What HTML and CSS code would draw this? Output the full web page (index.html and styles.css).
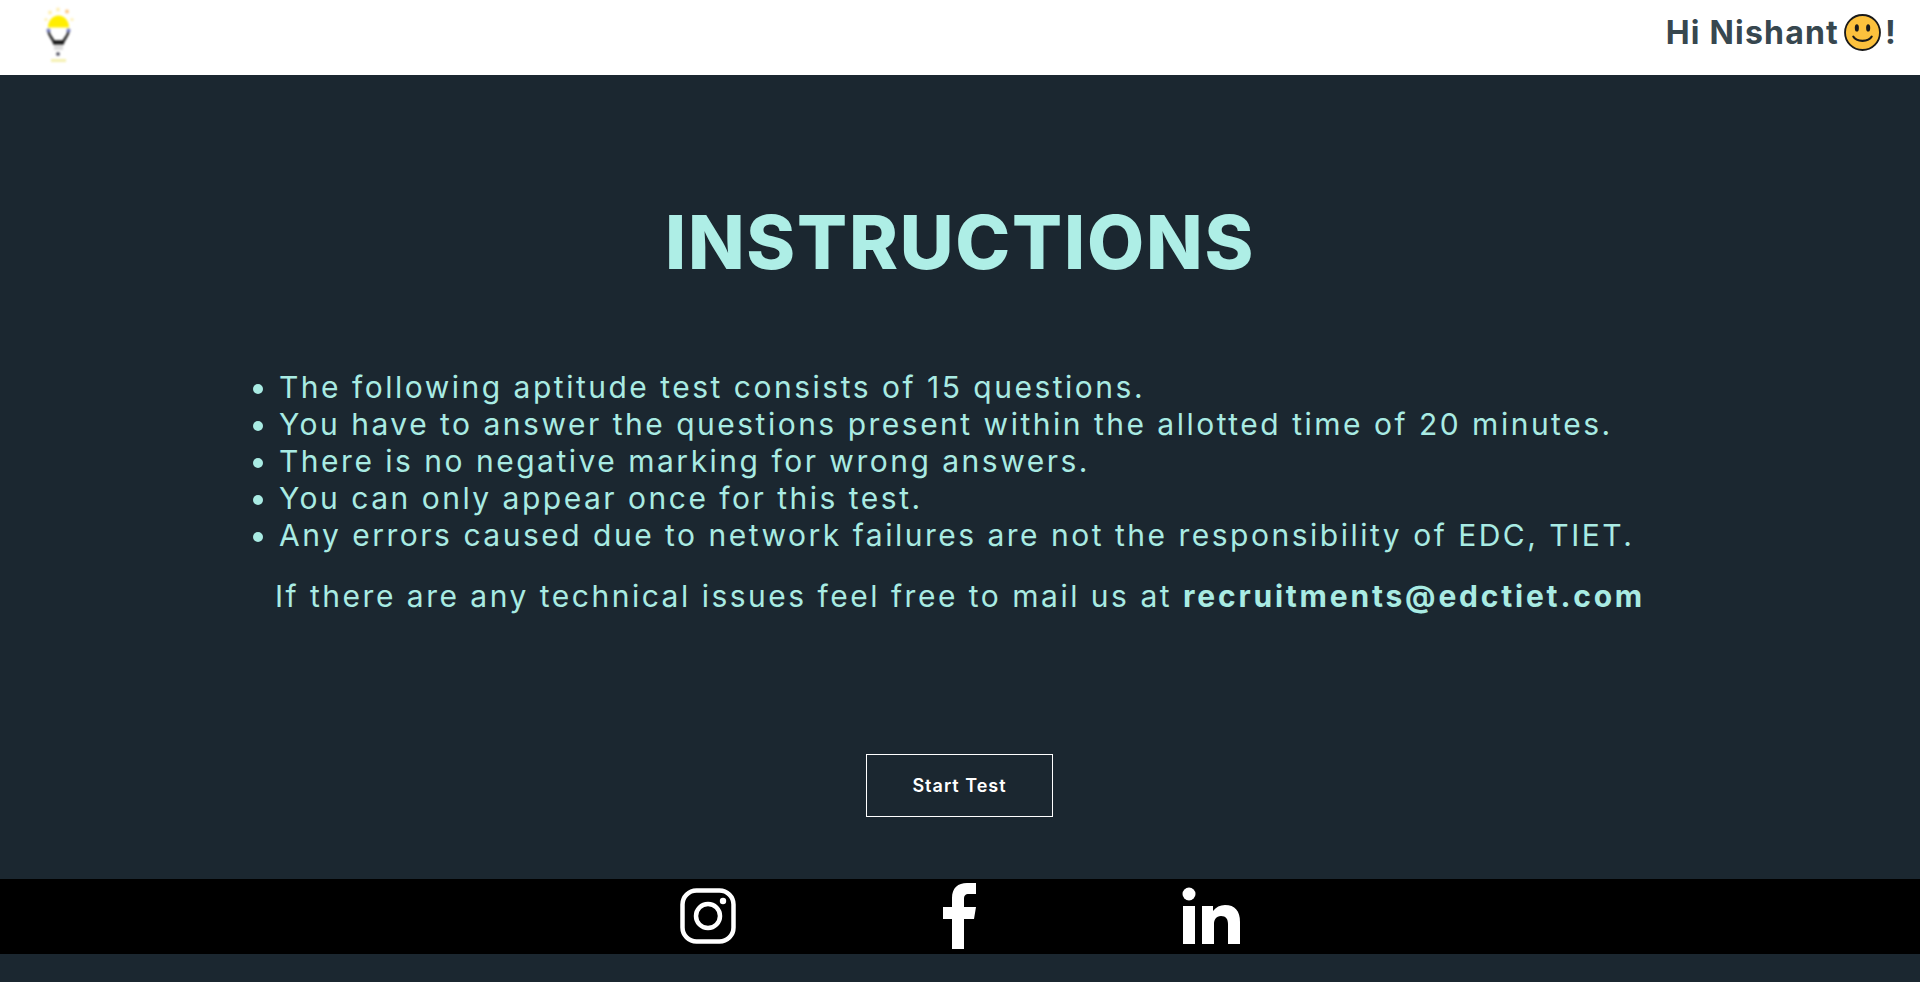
FILE: index.html
```html
<!DOCTYPE html>
<html lang="en">
<head>
    <meta charset="UTF-8">
    <meta name="viewport" content="width=device-width, initial-scale=1.0">
    <title>Instructions</title>
    <link rel="stylesheet" href="styles.css">
</head>
<body>
    <header class="topbar">
        <svg class="logo" viewBox="0 0 40 60" width="40" height="60" aria-hidden="true">
            <path d="M9 25.500a10.500 12 0 0 1 21 0z" fill="#ffee00"/>
            <circle cx="11" cy="10.500" r="2" fill="#fff0b0"/>
            <circle cx="19" cy="7.500" r="2" fill="#ffefb5"/>
            <circle cx="28" cy="9.500" r="2" fill="#ffc880"/>
            <circle cx="7" cy="17.500" r="1.600" fill="#fff0b0"/>
            <circle cx="33" cy="17.500" r="1.600" fill="#fff0b0"/>
            <path d="M9.500 28.500c0 6 4 7 5 11h10c1-4 5-5 5-11" fill="none" stroke="#222" stroke-width="2.500"/>
            <circle cx="9.500" cy="28.500" r="2" fill="#7078b8"/>
            <circle cx="29.500" cy="28.500" r="2" fill="#7078b8"/>
            <rect x="14" y="39" width="11" height="3.500" fill="#111"/>
            <rect x="15" y="43" width="9" height="5" fill="#ddd"/>
            <circle cx="19" cy="52" r="1.800" fill="#334"/>
            <rect x="12" y="57" width="15" height="3" fill="#f5f0b0"/>
        </svg>
        <div class="greeting">
            Hi Nishant<svg class="smiley" viewBox="0 0 36 36" width="37" height="37" role="img" aria-label="smile">
                <circle cx="18" cy="18" r="17" fill="#fcc13d" stroke="#1a1a1a" stroke-width="1.800"/>
                <ellipse cx="12.500" cy="13.500" rx="2" ry="3.600" fill="#1a1a1a"/>
                <ellipse cx="23.500" cy="13.500" rx="2" ry="3.600" fill="#1a1a1a"/>
                <path d="M9 22c3 5.500 15 5.500 18 0" fill="none" stroke="#1a1a1a" stroke-width="2" stroke-linecap="round"/>
            </svg>!
        </div>
    </header>

    <main class="content">
        <h1>INSTRUCTIONS</h1>
        <ul class="rules">
            <li>The following aptitude test consists of 15 questions.</li>
            <li>You have to answer the questions present within the allotted time of 20 minutes.</li>
            <li>There is no negative marking for wrong answers.</li>
            <li>You can only appear once for this test.</li>
            <li>Any errors caused due to network failures are not the responsibility of EDC, TIET.</li>
        </ul>
        <p class="contact">If there are any technical issues feel free to mail us at <strong>recruitments@edctiet.com</strong></p>
        <button type="button" class="start-btn">Start Test</button>
    </main>

    <footer class="social">
        <a href="#" aria-label="Instagram">
            <svg viewBox="0 0 56 56" width="56" height="56">
                <rect x="2.500" y="2.500" width="51" height="51" rx="14" fill="none" stroke="#fff" stroke-width="4.500"/>
                <circle cx="28" cy="28" r="12" fill="none" stroke="#fff" stroke-width="4.500"/>
                <circle cx="43" cy="13" r="3.200" fill="#fff"/>
            </svg>
        </a>
        <a href="#" aria-label="Facebook">
            <svg viewBox="0 0 56 66" width="56" height="66">
                <path d="M21 66V36H12V24H21V15C21 5 27 0 36 0H45V11H38C34 11 33 13 33 16V24H45L43 36H33V66z" fill="#fff"/>
            </svg>
        </a>
        <a href="#" aria-label="LinkedIn">
            <svg viewBox="0 0 58 57" width="58" height="57">
                <circle cx="7" cy="7" r="6.500" fill="#fff"/>
                <rect x="1" y="19" width="12" height="38" fill="#fff"/>
                <path d="M20 19H31V24C34 20 38 18 43 18C53 18 58 24 58 35V57H46V37C46 32 44 29 39 29C34 29 32 33 32 37V57H20z" fill="#fff"/>
            </svg>
        </a>
    </footer>
</body>
</html>
```

FILE: styles.css
```css
body {
    margin: 0;
    min-height: 100vh;
    background-color: #1b2730;
    font-family: Inter, "Liberation Sans", sans-serif;
    color: #a9ebe3;
}
.topbar {
    display: flex;
    align-items: center;
    justify-content: space-between;
    height: 75px;
    padding: 0 23px 0 39px;
    background: #fff;
}
.logo {
    margin-bottom: 12px;
    filter: blur(1px);
}
.greeting {
    display: flex;
    align-items: center;
    margin-bottom: 10px;
    font-size: 32px;
    font-weight: 700;
    letter-spacing: 1.2px;
    color: #37474f;
}
.smiley {
    margin: 0 4px 0 5px;
}
.content {
    display: flex;
    flex-direction: column;
    height: 804px;
    box-sizing: border-box;
}
h1 {
    margin: 122px 0 0;
    font-size: 74px;
    line-height: 90px;
    font-weight: 800;
    letter-spacing: 1.8px;
    text-align: center;
    color: #aeeee6;
}
.rules {
    margin: 82px 0 0;
    padding: 0 0 0 279px;
    font-size: 30px;
    line-height: 37px;
    font-weight: 400;
    letter-spacing: 2.5px;
}
.contact {
    margin: 24px 0 0;
    font-size: 30px;
    line-height: 37px;
    letter-spacing: 2.5px;
    text-align: center;
}
.contact strong {
    font-weight: 700;
    letter-spacing: 2.8px;
}
.start-btn {
    align-self: center;
    width: 187px;
    height: 63px;
    margin: 139px 1px 0 0;
    background: transparent;
    border: 1px solid #fff;
    font-family: inherit;
    font-size: 18px;
    font-weight: 600;
    letter-spacing: 1px;
    color: #fff;
    cursor: pointer;
}
.social {
    display: flex;
    justify-content: center;
    align-items: center;
    gap: 195px;
    height: 75px;
    padding-bottom: 2px;
    box-sizing: border-box;
    background: #000;
}
.social a {
    display: flex;
}
```
